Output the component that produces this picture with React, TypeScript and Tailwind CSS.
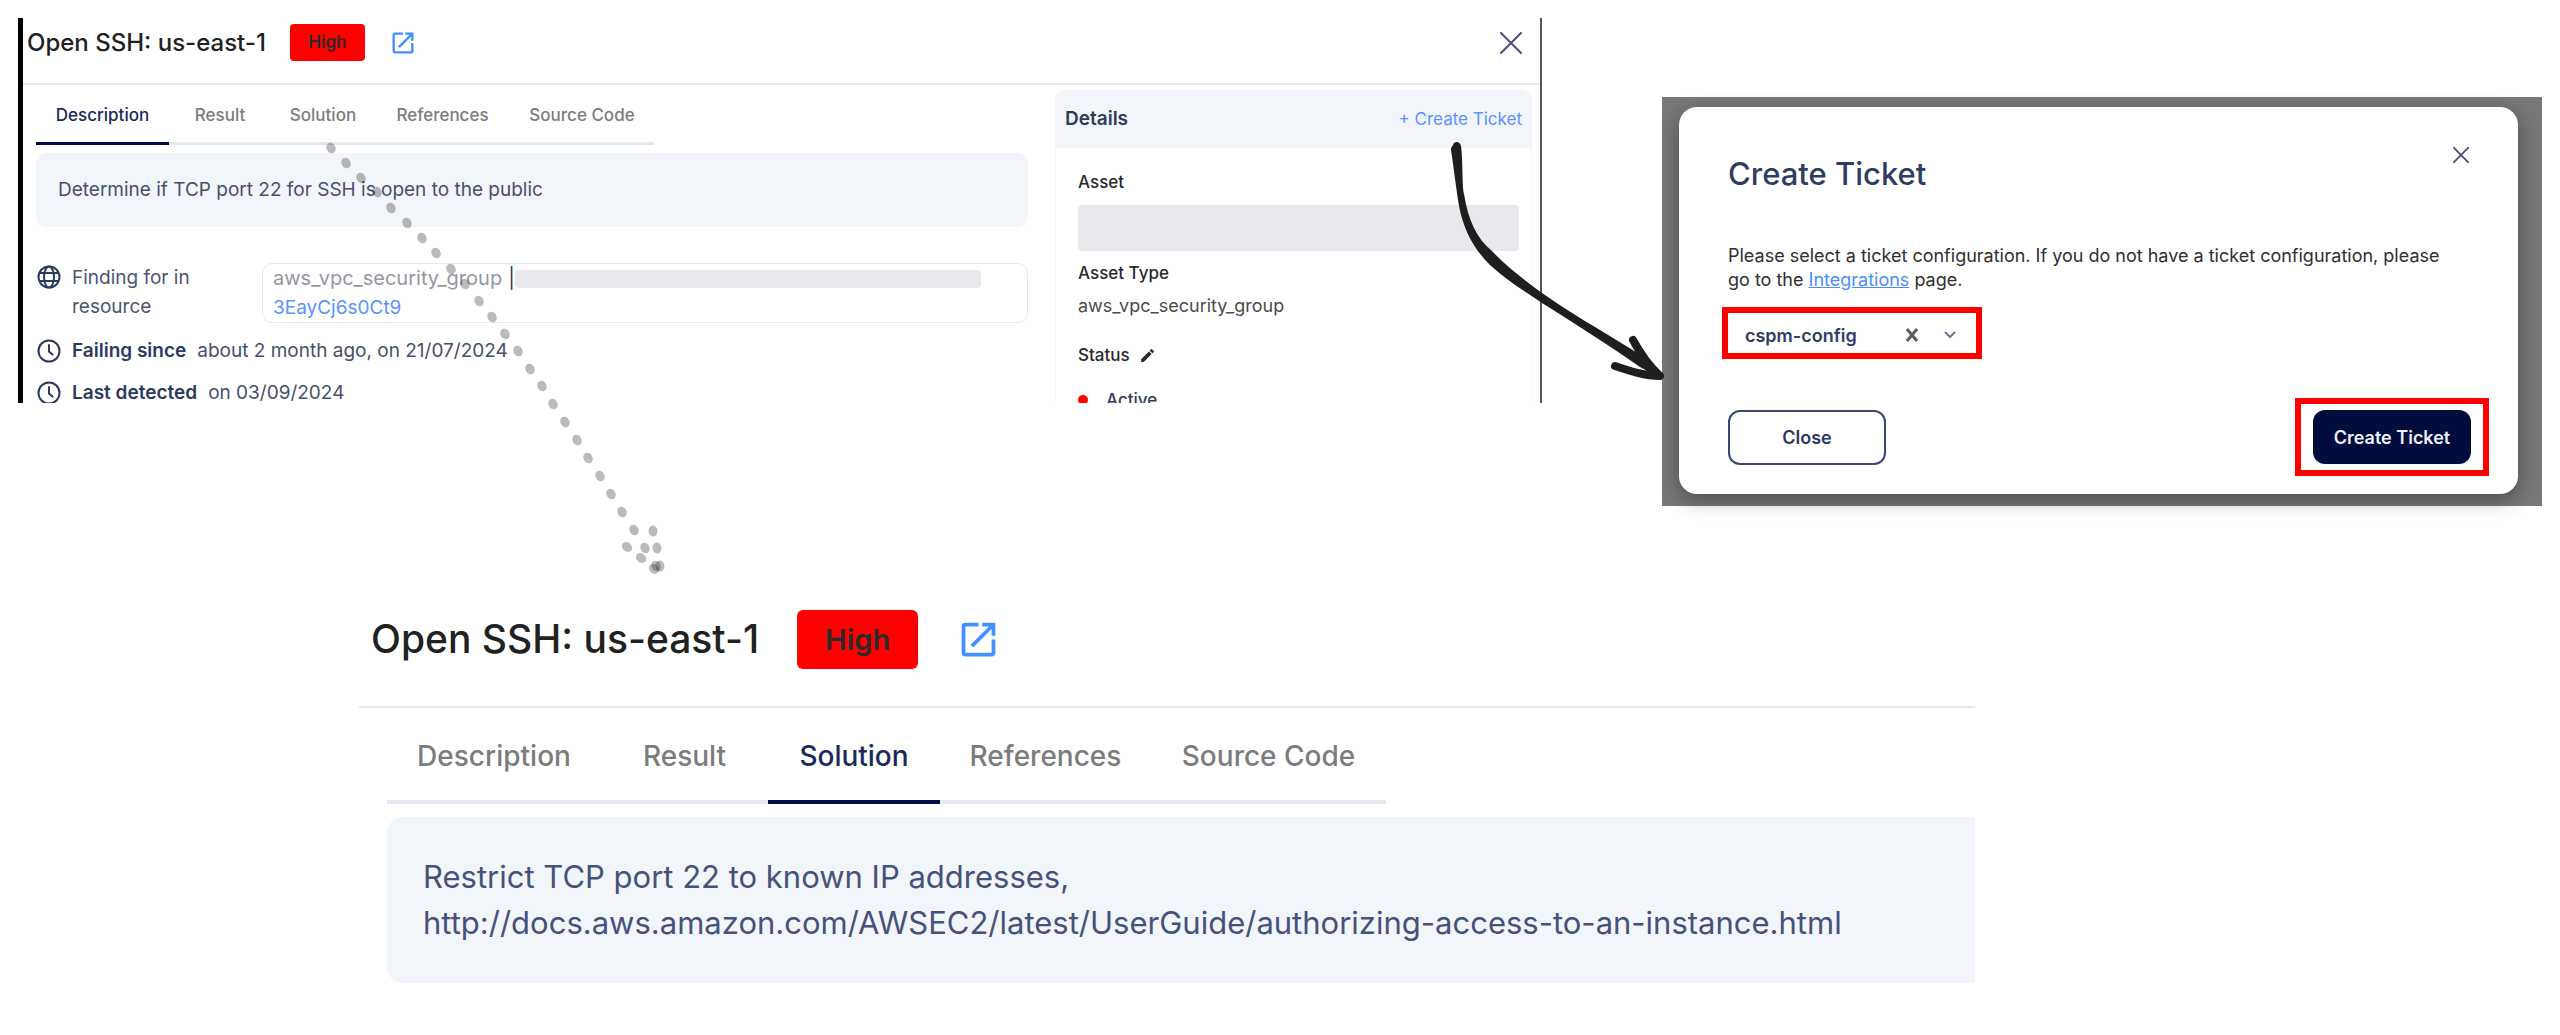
import React from "react";
import { MdEdit, MdOpenInNew } from "react-icons/md";

const tabs = ["Description", "Result", "Solution", "References", "Source Code"];

const sizes = {
  small: {
    header: "gap-6 pt-[6px] pb-[22px] pl-1 pr-[18px] border-b-2",
    title: "text-[24px]",
    badge: "h-[37px] w-[75px] rounded text-[17px]",
    link: "size-7",
    tabs: "grid-cols-[133px_102px_104px_135px_144px] h-[60px] text-[17px]",
    line: "border-b-3 pt-1",
  },
  large: {
    header: "gap-[38px] pb-[37px] pl-3 border-b-2",
    title: "text-[39px]",
    badge: "h-[59px] w-[121px] rounded-md text-[29px]",
    link: "size-[45px]",
    tabs: "grid-cols-[214px_167px_172px_211px_235px] h-24 text-[28px]",
    line: "border-b-4 pt-1",
  },
};

type Size = keyof typeof sizes;

function FindingHeader({ size, children }: { size: Size; children?: React.ReactNode }) {
  const s = sizes[size];
  return (
    <header className={`flex items-center border-[#e7e7e7] ${s.header}`}>
      <h2 className={`font-medium whitespace-nowrap text-[#212121] ${s.title}`}>Open SSH: us-east-1</h2>
      <span className={`flex items-center justify-center bg-[#ff0000] font-semibold text-[#2b2b2b] ${s.badge}`}>
        High
      </span>
      <a href="#finding" aria-label="Open finding in new window" className="text-[#4490ff]">
        <MdOpenInNew className={s.link} />
      </a>
      {children}
    </header>
  );
}

function TabBar({ size, active }: { size: Size; active: string }) {
  const s = sizes[size];
  return (
    <nav role="tablist" className={`grid w-fit ${s.tabs}`}>
      {tabs.map((tab) => (
        <button
          key={tab}
          type="button"
          role="tab"
          aria-selected={tab === active}
          className={`font-medium whitespace-nowrap ${s.line} ${
            tab === active ? "border-[#000d45] text-[#1b2a5a]" : "border-[#e3e7f0] text-[#7c7c7c]"
          }`}
        >
          {tab}
        </button>
      ))}
    </nav>
  );
}

function ClockIcon() {
  return (
    <svg viewBox="0 0 24 24" className="size-6 shrink-0" fill="none" stroke="#2c3a60" strokeWidth="2" strokeLinecap="round">
      <circle cx="12" cy="12" r="10.5" />
      <path d="M12 6v6.5l3.5 3" />
    </svg>
  );
}

function GlobeIcon() {
  return (
    <svg viewBox="0 0 24 24" className="mt-[2px] size-6 shrink-0" fill="none" stroke="#2c3a60" strokeWidth="2">
      <circle cx="12" cy="12" r="10.5" />
      <ellipse cx="12" cy="12" rx="5" ry="10.5" />
      <path d="M2.5 8h19M2.5 16h19" />
    </svg>
  );
}

function CloseIcon({ className }: { className: string }) {
  return (
    <svg viewBox="0 0 22 22" className={className} fill="none" stroke="#46527a" strokeLinecap="round">
      <path d="M1 1l20 20M21 1L1 21" />
    </svg>
  );
}

function FindingPanel() {
  return (
    <section className="h-[385px] min-w-0 overflow-hidden border-r-2 border-l-5 border-r-[#555555] border-l-black">
      <FindingHeader size="small">
        <button type="button" aria-label="Close" className="ml-auto">
          <CloseIcon className="size-[22px] stroke-2" />
        </button>
      </FindingHeader>
      <div className="grid grid-cols-[992fr_477fr] gap-[27px] pr-2 pl-[13px]">
        <div className="min-w-0">
          <TabBar size="small" active="Description" />
          <p className="mt-2 rounded-[10px] bg-[#f2f5fa] px-[22px] py-[23px] text-[19px] leading-7 text-[#46506b]">
            Determine if TCP port 22 for SSH is open to the public
          </p>
          <div className="mt-9 flex pl-[1px] text-[19px] leading-[29px] text-[#4a5570]">
            <GlobeIcon />
            <p className="ml-[11px] w-[190px] shrink-0">
              Finding for in
              <br />
              resource
            </p>
            <div className="grow rounded-[10px] border border-[#dfeaff] px-[10px]">
              <div className="flex items-center text-[20px] text-[#93979f]">
                aws_vpc_security_group
                <span className="ml-[6px] text-[#3a3560]">|</span>
                <span className="mr-[36px] h-[18px] grow rounded-sm bg-[#e8e8ed]" />
              </div>
              <a href="#resource" className="block text-[#5b92ff]">
                3EayCj6s0Ct9
              </a>
            </div>
          </div>
          <ul className="mt-[7px] pl-[1px] text-[19px] text-[#46506b]">
            <li className="flex h-[42px] items-center gap-[11px]">
              <ClockIcon />
              <strong className="font-semibold text-[#2c3a60]">Failing since</strong>
              <span>about 2 month ago, on 21/07/2024</span>
            </li>
            <li className="flex h-[42px] items-center gap-[11px]">
              <ClockIcon />
              <strong className="font-semibold text-[#2c3a60]">Last detected</strong>
              <span>on 03/09/2024</span>
            </li>
          </ul>
        </div>
        <aside className="mt-[5px] min-w-0 rounded-t-[10px] border border-t-0 border-[#f2f5fa] text-[17px] leading-6">
          <div className="flex h-[58px] items-center justify-between rounded-t-[10px] bg-[#f2f5fa] px-[9px]">
            <h3 className="text-[19px] font-semibold text-[#2f3b57]">Details</h3>
            <button type="button" className="text-[#5b92ff]">
              + Create Ticket
            </button>
          </div>
          <div className="flex flex-col pt-[22px] pr-3 pl-[22px] text-[#2a2a2a]">
            <h4 className="font-medium">Asset</h4>
            <div className="mt-[11px] h-[46px] rounded bg-[#e8e8ed]" />
            <h4 className="mt-[10px] font-medium">Asset Type</h4>
            <p className="mt-[9px] text-[18px] text-[#4a4a4a]">aws_vpc_security_group</p>
            <div className="mt-[25px] flex items-center gap-[9px]">
              <h4 className="font-medium">Status</h4>
              <button type="button" aria-label="Edit status">
                <MdEdit className="size-[17px]" />
              </button>
            </div>
            <p className="mt-[21px] flex items-center gap-[18px] font-medium text-[#2f3b57]">
              <span className="size-[10px] rounded-full bg-[#ff0000]" />
              Active
            </p>
          </div>
        </aside>
      </div>
    </section>
  );
}

function TicketDialog() {
  return (
    <section className="mt-[79px] min-w-0 bg-[#787878] pt-[10px] pr-6 pb-3 pl-[17px]">
      <div
        role="dialog"
        aria-labelledby="ticket-title"
        className="rounded-[18px] bg-white px-[49px] pt-10 pb-[18px] shadow-[0_6px_18px_2px_rgba(0,0,0,0.3)]"
      >
        <div className="flex items-start justify-between">
          <h2 id="ticket-title" className="mt-[7px] text-[31px] leading-10 font-medium text-[#2f3d63]">
            Create Ticket
          </h2>
          <button type="button" aria-label="Close dialog">
            <CloseIcon className="size-4 stroke-[2.5]" />
          </button>
        </div>
        <p className="mt-[50px] text-[18px] leading-6 text-[#2f2f2f]">
          Please select a ticket configuration. If you do not have a ticket configuration, please
          <br />
          go to the{" "}
          <a href="#integrations" className="text-[#4b8dff] underline">
            Integrations
          </a>{" "}
          page.
        </p>
        <div className="mt-[15px] ml-[-6px] flex h-[52px] w-[260px] items-center border-6 border-[#ff0000] pt-1 pr-5 pl-[17px]">
          <select
            aria-label="Ticket configuration"
            defaultValue="cspm-config"
            className="min-w-0 grow appearance-none text-[18px] font-semibold text-[#2f3d63]"
          >
            <option>cspm-config</option>
          </select>
          <button type="button" aria-label="Clear selection">
            <svg viewBox="0 0 12 14" className="h-[14px] w-3" stroke="#5c5c5c" strokeWidth="3" fill="none">
              <path d="M1 1l10 12M11 1L1 13" />
            </svg>
          </button>
          <svg viewBox="0 0 12 8" className="ml-[26px] h-2 w-3" stroke="#6b7594" strokeWidth="2" fill="none">
            <path d="M1 1l5 5 5-5" />
          </svg>
        </div>
        <div className="mt-[39px] mr-[-20px] flex items-center justify-between text-[18px] font-semibold">
          <button type="button" className="h-[55px] w-[158px] rounded-xl border-2 border-[#3a4673] text-[#2b3763]">
            Close
          </button>
          <div className="border-6 border-[#ff0000] px-3 py-[6px]">
            <button type="button" className="h-[54px] w-[158px] rounded-xl bg-[#000d3d] text-[#eef0f8]">
              Create Ticket
            </button>
          </div>
        </div>
      </div>
    </section>
  );
}

function SolutionPanel() {
  return (
    <section className="mt-[104px] mr-[585px] ml-[359px]">
      <FindingHeader size="large" />
      <div className="pl-7">
        <TabBar size="large" active="Solution" />
        <p className="mt-[13px] rounded-l-2xl bg-[#f2f5fa] py-[37px] pr-8 pl-9 text-[31px] leading-[46px] text-[#46527a]">
          Restrict TCP port 22 to known IP addresses,
          <br />
          http://docs.aws.amazon.com/AWSEC2/latest/UserGuide/authorizing-access-to-an-instance.html
        </p>
      </div>
    </section>
  );
}

const dots = [
  [331, 148], [346, 163], [361, 178], [377, 192], [391, 208], [407, 223], [422, 238], [436, 253],
  [451, 269], [465, 284], [479, 301], [492, 317], [505, 334], [518, 351], [530, 369], [542, 386],
  [553, 404], [565, 422], [577, 440], [588, 458], [600, 476], [611, 494], [622, 512], [634, 530],
  [645, 548], [656, 566], [653, 531], [657, 548], [660, 566], [627, 547], [641, 558], [654, 569],
];

function Arrows() {
  return (
    <svg aria-hidden="true" className="pointer-events-none absolute top-0 left-0 h-[600px] w-[1700px]" viewBox="0 0 1700 600">
      {dots.map(([x, y], i) => {
        const angle = i < 26 ? -30 : i < 29 ? -8 : -52;
        return (
          <ellipse key={i} cx={x} cy={y} rx="4.5" ry="5.5" fill="#1e1e1e" fillOpacity="0.3" transform={`rotate(${angle} ${x} ${y})`} />
        );
      })}
      <path
        fill="#1e1e1e"
        d="M1451 150C1451 146 1453 146 1453 145C1454 141 1460 141 1461 146C1463 160 1462 185 1464 194C1468 219 1476 238 1492 251C1507 267 1523 279 1542 293C1562 307 1580 318 1600 330L1644 357L1660 378L1640 367C1610 346 1572 322 1542 303C1521 289 1505 279 1490 265C1475 250 1464 232 1459 206C1456 187 1454 170 1451 150Z"
      />
      <g fill="none" stroke="#1e1e1e" strokeWidth="8" strokeLinecap="round" strokeLinejoin="round">
        <path d="M1633 340C1640 353 1649 366 1660 376C1645 376 1630 371 1615 366" />
        <path d="M1640 359L1655 373" />
      </g>
    </svg>
  );
}

export default function App() {
  return (
    <main className="relative min-h-screen bg-white font-['Inter',sans-serif]">
      <div className="grid grid-cols-[1524fr_880fr] items-start gap-[120px] px-[18px] pt-[18px]">
        <FindingPanel />
        <TicketDialog />
      </div>
      <SolutionPanel />
      <Arrows />
    </main>
  );
}
